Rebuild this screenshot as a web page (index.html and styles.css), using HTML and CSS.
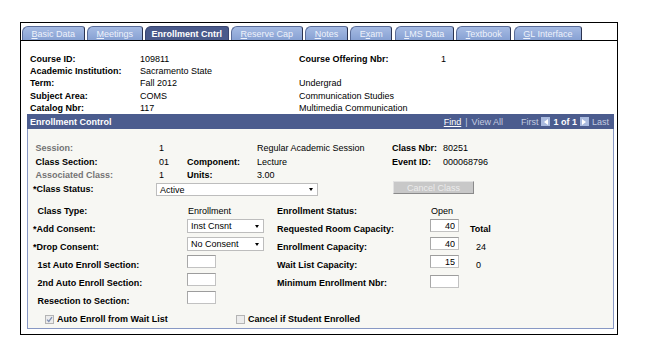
FILE: index.html
```html
<!DOCTYPE html>
<html>
<head>
  <title>Enrollment Cntrl</title>
  <link rel="stylesheet" href="styles.css">
</head>
<body>
  <div class="frame">
    <ul class="tabs">
      <li><u>B</u>asic Data</li>
      <li><u>M</u>eetings</li>
      <li class="active">Enrollment Cntrl</li>
      <li><u>R</u>eserve Cap</li>
      <li><u>N</u>otes</li>
      <li>E<u>x</u>am</li>
      <li><u>L</u>MS Data</li>
      <li><u>T</u>extbook</li>
      <li><u>G</u>L Interface</li>
    </ul>

    <div class="course">
      <span class="lbl">Course ID:</span><span>109811</span><span class="lbl">Course Offering Nbr:</span><span>1</span>
      <span class="lbl">Academic Institution:</span><span>Sacramento State</span><span></span><span></span>
      <span class="lbl">Term:</span><span>Fall 2012</span><span>Undergrad</span><span></span>
      <span class="lbl">Subject Area:</span><span>COMS</span><span>Communication Studies</span><span></span>
      <span class="lbl">Catalog Nbr:</span><span>117</span><span>Multimedia Communication</span><span></span>
    </div>

    <div class="panel">
      <div class="panel-head">
        <span class="title">Enrollment Control</span>
        <div class="nav">
          <a class="find" href="#">Find</a>
          <span class="dim sep">|</span>
          <span class="dim">View All</span>
          <span class="dim first">First</span>
          <span class="navbtn"><span class="tri-left"></span></span>
          <b>1 of 1</b>
          <span class="navbtn"><span class="tri-right"></span></span>
          <span class="dim">Last</span>
        </div>
      </div>

      <div class="panel-body">
        <div class="info">
          <span class="lbl grey">Session:</span><span class="val">1</span><span></span><span>Regular Academic Session</span><span class="lbl side">Class Nbr:</span><span>80251</span>
          <span class="lbl">Class Section:</span><span class="val">01</span><span class="lbl side">Component:</span><span>Lecture</span><span class="lbl side">Event ID:</span><span>000068796</span>
          <span class="lbl grey">Associated Class:</span><span class="val">1</span><span class="lbl side">Units:</span><span>3.00</span><span></span><span></span>
          <span class="lbl req">*Class Status:</span>
          <div class="sel status"><span>Active</span><span class="caret"></span></div>
          <button class="cancel" disabled>Cancel Class</button>
        </div>

        <div class="enroll">
          <span class="lbl">Class Type:</span><span class="val">Enrollment</span><span class="lbl side">Enrollment Status:</span><span class="val">Open</span><span></span>

          <span class="lbl req">*Add Consent:</span>
          <div class="sel small"><span>Inst Cnsnt</span><span class="caret"></span></div>
          <span class="lbl side">Requested Room Capacity:</span><input class="box" type="text" value="40"><span class="lbl extra">Total</span>

          <span class="lbl req">*Drop Consent:</span>
          <div class="sel small"><span>No Consent</span><span class="caret"></span></div>
          <span class="lbl side">Enrollment Capacity:</span><input class="box" type="text" value="40"><span class="extra num">24</span>

          <span class="lbl">1st Auto Enroll Section:</span><input class="box" type="text" value="">
          <span class="lbl side">Wait List Capacity:</span><input class="box" type="text" value="15"><span class="extra num">0</span>

          <span class="lbl">2nd Auto Enroll Section:</span><input class="box" type="text" value="">
          <span class="lbl side">Minimum Enrollment Nbr:</span><input class="box low" type="text" value=""><span></span>

          <span class="lbl">Resection to Section:</span><input class="box" type="text" value="">
          <span></span><span></span><span></span>
        </div>

        <div class="checks">
          <label class="chk wide">
            <span class="cb"><svg width="7" height="7" viewBox="0 0 7 7"><path d="M1 3.6 L2.8 5.4 L6 1.2" fill="none" stroke="#7f8fb3" stroke-width="1.3"/></svg></span>
            Auto Enroll from Wait List
          </label>
          <label class="chk">
            <span class="cb"></span>
            Cancel if Student Enrolled
          </label>
        </div>
      </div>
    </div>
  </div>
</body>
</html>
```

FILE: styles.css
```css
body {
  margin: 0;
  background-color: #fff;
  font-family: 'Liberation Sans', Arial, sans-serif;
  font-size: 9px;
  color: #000;
}

.frame {
  margin: 22px 0 0 20px;
  width: 598px;
  box-sizing: border-box;
  border: 1px solid #000;
  padding-bottom: 5px;
}

/* tab strip */
.tabs {
  list-style-type: none;
  margin: 3px 0 0 0;
  padding: 0 0 0 1px;
  display: flex;
  gap: 2.5px;
  height: 14px;
  border-bottom: 1px solid #000;
}

.tabs li {
  height: 14px;
  line-height: 14px;
  box-sizing: border-box;
  padding: 0 8.5px;
  color: #eef2fb;
  background: linear-gradient(#a6bbe3, #87a1d3);
  border: 1px solid #5a6c98;
  border-bottom: none;
  border-right-color: #2b3350;
  border-radius: 6px 3px 0 0;
  white-space: nowrap;
}

.tabs li u {
  text-decoration: underline;
}

.tabs li.active {
  padding: 0 5.5px;
  color: #fff;
  font-weight: bold;
  background: #4a5a8b;
  border-color: #3a4670;
}

/* course header */
.course {
  display: grid;
  grid-template-columns: 110px 159px 142px auto;
  grid-auto-rows: 12.4px;
  line-height: 12.4px;
  padding: 11.5px 0 0 9px;
}

.lbl {
  font-weight: bold;
  white-space: nowrap;
}

/* enrollment control panel */
.panel {
  margin: 0 3px 0 6px;
}

.panel-head {
  display: flex;
  justify-content: space-between;
  align-items: center;
  height: 15px;
  padding: 0 5px 0 3px;
  background-color: #4b5c8e;
  color: #fff;
}

.title {
  font-weight: bold;
}

.nav {
  display: flex;
  align-items: center;
  gap: 3px;
}

.find {
  color: #fff;
  text-decoration: underline;
}

.dim {
  color: #c3cbe0;
}

.sep {
  margin: 0 1px;
}

.first {
  margin-left: 15px;
}

.navbtn {
  width: 9px;
  height: 9px;
  background-color: #a9badf;
  display: flex;
  align-items: center;
  justify-content: center;
}

.tri-left {
  border-top: 3px solid transparent;
  border-bottom: 3px solid transparent;
  border-right: 4px solid #fff;
}

.tri-right {
  border-top: 3px solid transparent;
  border-bottom: 3px solid transparent;
  border-left: 4px solid #fff;
}

.panel-body {
  background-color: #f7f7f3;
  border: 1px solid #8898c4;
  border-top: none;
  padding: 12px 0 0 5px;
}

.info {
  display: grid;
  grid-template-columns: 123px 31px 70px 135px 51px auto;
  grid-template-rows: 14px 13px 13px 16px;
  align-items: center;
}

.info .lbl {
  padding-left: 2.5px;
}

.info .req,
.info .side {
  padding-left: 0;
}

.grey {
  color: #737373;
}

.val {
  padding-left: 3px;
}

.sel {
  display: flex;
  justify-content: space-between;
  align-items: center;
  height: 13px;
  box-sizing: border-box;
  background-color: #fff;
  border: 1px solid #bdbdbd;
  padding: 0 4px 0 3px;
}

.caret {
  border-left: 2.5px solid transparent;
  border-right: 2.5px solid transparent;
  border-top: 3px solid #000;
}

.status {
  grid-column: 2 / span 3;
  width: 162px;
  align-self: start;
  margin-top: 2px;
}

.cancel {
  grid-column: 5 / span 2;
  align-self: start;
  margin: 0 0 0 1px;
  width: 81px;
  height: 13px;
  padding: 0;
  font-family: inherit;
  font-size: 9px;
  color: #ececec;
  background-color: #c8c8c8;
  border: 1px solid;
  border-color: #e2e2e2 #8a8a8a #8a8a8a #e2e2e2;
}

.enroll {
  display: grid;
  grid-template-columns: 154px 90px 153px 36px auto;
  grid-auto-rows: 18px;
  line-height: 18px;
  margin-top: 5px;
}

.enroll .lbl {
  padding-left: 4.5px;
}

.enroll .req,
.enroll .side {
  padding-left: 0;
}

.enroll .val {
  padding-left: 1px;
}

.enroll .sel.small {
  width: 77px;
  margin-top: -1px;
  height: 14px;
  line-height: 12px;
}

.box {
  width: 29px;
  height: 13px;
  margin: -1px 0 0 0;
  box-sizing: border-box;
  border: 1px solid #c2c2c2;
  border-top-color: #9d9d9d;
  border-left-color: #a8a8a8;
  background-color: #fff;
  font-family: inherit;
  font-size: 9px;
  text-align: right;
  padding: 0 3px 0 0;
  outline: none;
}

.enroll .box {
  align-self: start;
}

.box.low {
  margin-top: 1px;
}

.extra {
  padding-left: 4px !important;
}

.num {
  padding-left: 10px !important;
}

.checks {
  display: flex;
  align-items: center;
  height: 18px;
  padding-left: 12px;
}

.chk {
  display: flex;
  align-items: center;
  gap: 3px;
  font-weight: bold;
}

.chk.wide {
  width: 191px;
}

.cb {
  width: 9px;
  height: 9px;
  box-sizing: border-box;
  border: 1px solid #b4b4b4;
  background-color: #ececec;
  display: flex;
  align-items: center;
  justify-content: center;
}
```
